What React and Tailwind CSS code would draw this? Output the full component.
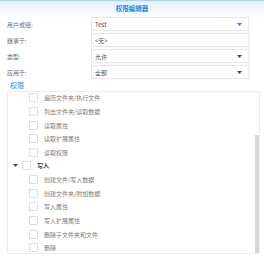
import React from "react";

const font = { fontFamily: '"Noto Sans CJK SC", "Noto Sans", sans-serif' };

function Tri({ blue }) {
  return (
    <svg width="5" height="3" viewBox="0 0 5 3" className="shrink-0">
      <path d="M0 0 H5 L2.5 3 Z" fill={blue ? "#1e88e5" : "#4a4a4a"} />
    </svg>
  );
}

function FormRow({ label, value, arrow, blue }) {
  return (
    <div className="flex items-center h-[14px]">
      <div className="w-[91px] pl-[7px] text-[6px] text-[#707070]">{label}</div>
      <div className="w-[158px] h-[14px] border border-[#e6e6e6] bg-white flex items-center justify-between pl-[3px] pr-[6px] text-[6px] text-[#505050]">
        <span>{value}</span>
        {arrow && <Tri blue={blue} />}
      </div>
    </div>
  );
}

function Box() {
  return <div className="w-[9px] h-[9px] border border-[#dcdcdc] rounded-[1px] bg-white shrink-0" />;
}

function Item({ text }) {
  return (
    <div className="flex items-center h-[13.64px] pl-[21px] gap-[6px]">
      <Box />
      <span className="text-[6px] text-[#7a7a7a]">{text}</span>
    </div>
  );
}

export default function App() {
  const read = ["遍历文件夹/执行文件", "列出文件夹/读取数据", "读取属性", "读取扩展属性", "读取权限"];
  const write = ["创建文件/写入数据", "创建文件夹/附加数据", "写入属性", "写入扩展属性", "删除子文件夹和文件", "删除"];
  return (
    <div className="w-[264px] h-[256px] bg-white overflow-hidden" style={font}>
      <div className="h-[17px] border-t border-[#a9d3f3] bg-gradient-to-b from-[#e2f0fc] to-white flex items-center justify-center">
        <span className="text-[6.5px] font-bold text-[#1e88e5] -mt-[1px]">权限编辑器</span>
      </div>
      <div className="flex flex-col gap-[2px]">
        <FormRow label="用户或组:" value="Test" arrow blue />
        <FormRow label="继承于:" value="<无>" />
        <FormRow label="类型:" value="允许" arrow />
        <FormRow label="应用于:" value="全部" arrow />
      </div>
      <div className="h-[12px] pl-[10px] flex items-center text-[7px] text-[#2a8ee6]">权限</div>
      <div className="relative ml-[7px] w-[253px] h-[163px] border border-[#ededed] overflow-hidden">
        <div className="-mt-[1px]">
          {read.map((t) => (
            <Item key={t} text={t} />
          ))}
          <div className="flex items-center h-[13.64px] pl-[5px]">
            <Tri />
            <div className="ml-[4px]">
              <Box />
            </div>
            <span className="ml-[6px] text-[6px] font-bold text-[#3a3a3a]">写入</span>
          </div>
          {write.map((t) => (
            <Item key={t} text={t} />
          ))}
        </div>
        <div className="absolute right-[0px] top-[43px] bottom-0 w-[4px] bg-[#d6d6d6]" />
      </div>
    </div>
  );
}
